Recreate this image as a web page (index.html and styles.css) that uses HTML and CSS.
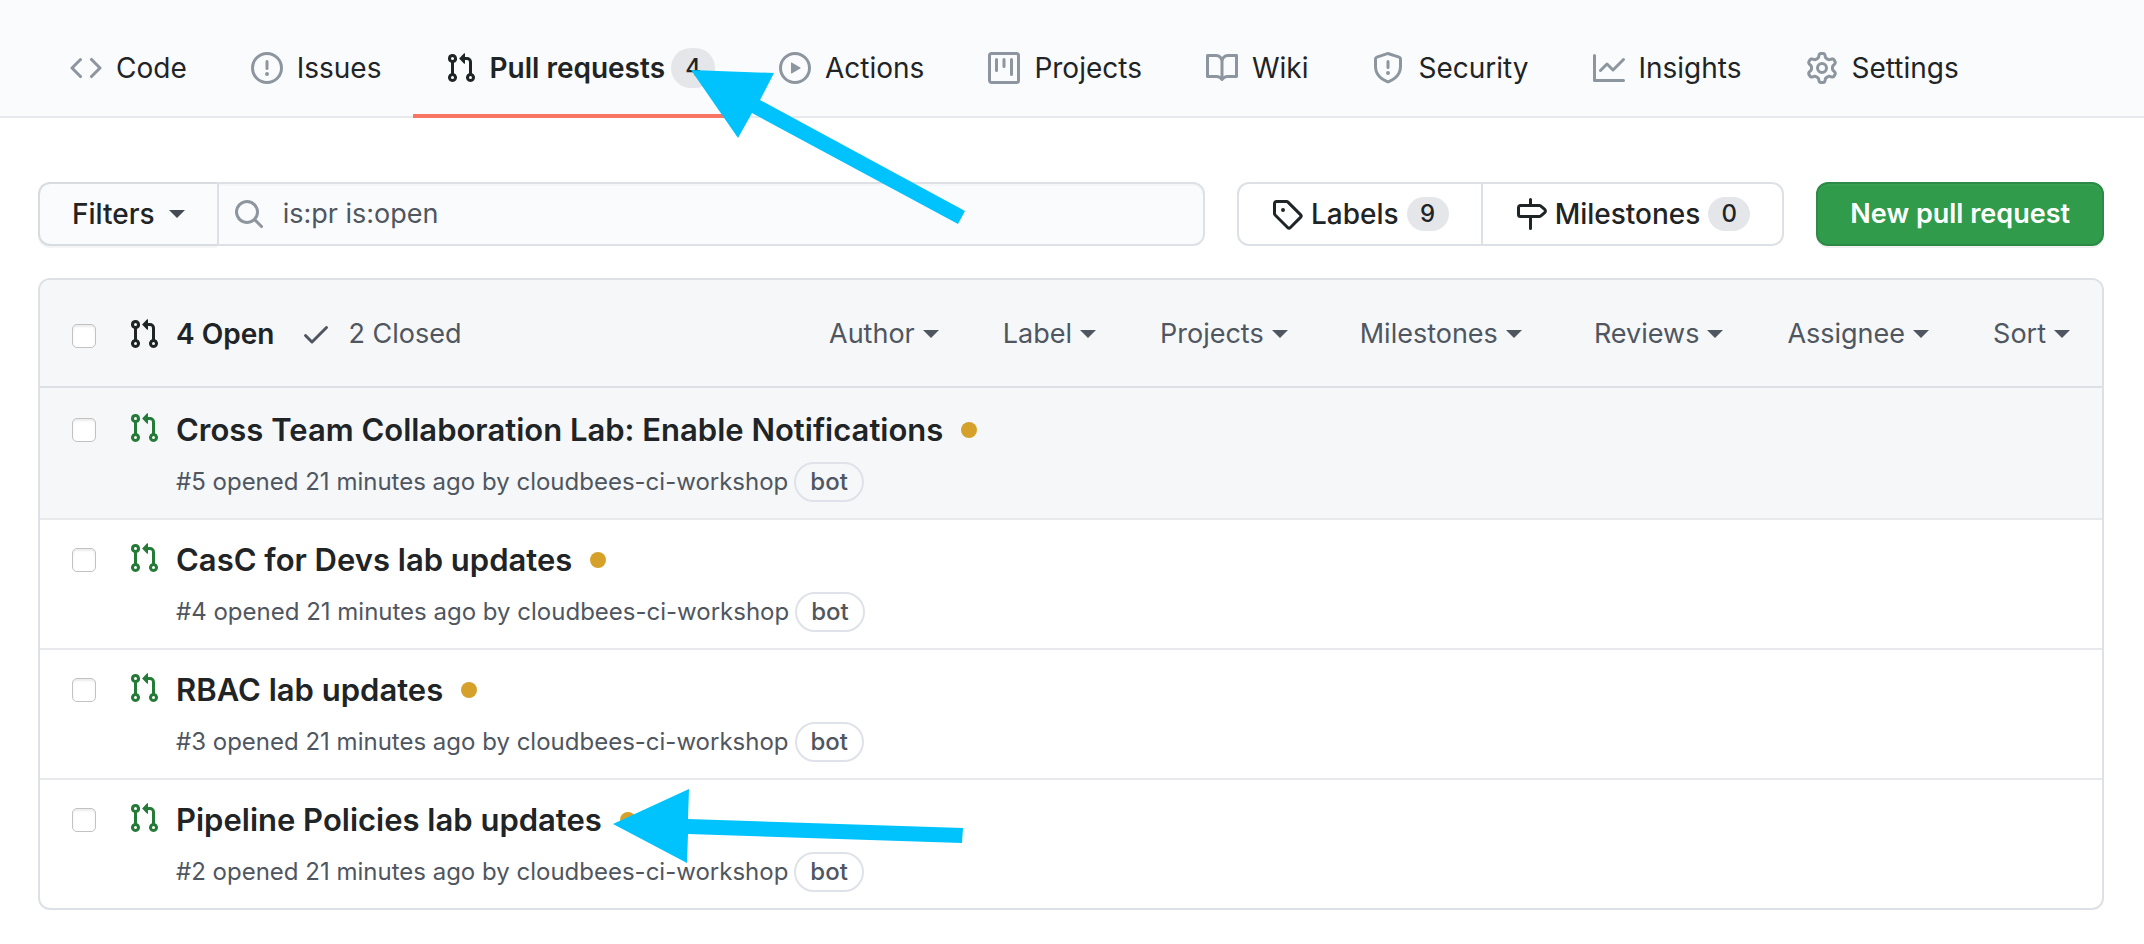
FILE: index.html
```html
<!DOCTYPE html>
<html lang="en">
<head>
<meta charset="utf-8">
<title>Pull requests</title>
<link rel="stylesheet" href="styles.css">
</head>
<body>
<svg class="sprite" aria-hidden="true">
  <symbol id="code" viewBox="0 0 16 16"><path d="M4.72 3.22a.75.75 0 011.06 1.06L2.06 8l3.72 3.72a.75.75 0 11-1.06 1.06L.47 8.53a.75.75 0 010-1.06l4.25-4.25zm6.56 0a.75.75 0 10-1.06 1.06L13.94 8l-3.72 3.72a.75.75 0 101.06 1.06l4.25-4.25a.75.75 0 000-1.06l-4.25-4.25z"/></symbol>
  <symbol id="issue" viewBox="0 0 16 16"><path fill-rule="evenodd" d="M8 1.5a6.5 6.5 0 100 13 6.5 6.5 0 000-13zM0 8a8 8 0 1116 0A8 8 0 010 8zm9 3a1 1 0 11-2 0 1 1 0 012 0zm-.25-6.25a.75.75 0 00-1.5 0v3.5a.75.75 0 001.5 0v-3.5z"/></symbol>
  <symbol id="pr" viewBox="0 0 16 16"><path fill-rule="evenodd" d="M7.177 3.073L9.573.677A.25.25 0 0110 .854v4.792a.25.25 0 01-.427.177L7.177 3.427a.25.25 0 010-.354zM3.75 2.5a.75.75 0 100 1.5.75.75 0 000-1.5zm-2.25.75a2.25 2.25 0 113 2.122v5.256a2.251 2.251 0 11-1.5 0V5.372A2.25 2.25 0 011.5 3.25zM11 2.5h-1V4h1a1 1 0 011 1v5.628a2.251 2.251 0 101.5 0V5A2.5 2.5 0 0011 2.5zm1 10.25a.75.75 0 111.5 0 .75.75 0 01-1.5 0zM3.75 12a.75.75 0 100 1.5.75.75 0 000-1.5z"/></symbol>
  <symbol id="play" viewBox="0 0 16 16"><path fill-rule="evenodd" d="M1.5 8a6.5 6.5 0 1113 0 6.5 6.5 0 01-13 0zM8 0a8 8 0 100 16A8 8 0 008 0zM6.379 5.227A.25.25 0 006 5.442v5.117a.25.25 0 00.379.214l4.264-2.559a.25.25 0 000-.428L6.379 5.227z"/></symbol>
  <symbol id="project" viewBox="0 0 16 16"><path fill-rule="evenodd" d="M1.75 0A1.75 1.75 0 000 1.75v12.5C0 15.216.784 16 1.75 16h12.5A1.75 1.75 0 0016 14.25V1.75A1.75 1.75 0 0014.25 0H1.75zM1.5 1.75a.25.25 0 01.25-.25h12.5a.25.25 0 01.25.25v12.5a.25.25 0 01-.25.25H1.75a.25.25 0 01-.25-.25V1.75zM11.75 3a.75.75 0 00-.75.75v7.5a.75.75 0 001.5 0v-7.5a.75.75 0 00-.75-.75zm-8.25.75a.75.75 0 011.5 0v5.5a.75.75 0 01-1.5 0v-5.5zM8 3a.75.75 0 00-.75.75v3.5a.75.75 0 001.5 0v-3.5A.75.75 0 008 3z"/></symbol>
  <symbol id="book" viewBox="0 0 16 16"><path fill-rule="evenodd" d="M0 1.75A.75.75 0 01.75 1h4.253c1.227 0 2.317.59 3 1.501A3.744 3.744 0 0111.006 1h4.245a.75.75 0 01.75.75v10.5a.75.75 0 01-.75.75h-4.507a2.25 2.25 0 00-1.591.659l-.622.621a.75.75 0 01-1.06 0l-.622-.621A2.25 2.25 0 005.258 13H.75a.75.75 0 01-.75-.75V1.75zm8.755 3a2.25 2.25 0 012.25-2.25H14.5v9h-3.757c-.71 0-1.4.201-1.992.572l.004-7.322zm-1.504 7.324l.004-5.073-.002-2.253A2.25 2.25 0 005.003 2.5H1.5v9h3.757a3.75 3.75 0 011.994.574z"/></symbol>
  <symbol id="shield" viewBox="0 0 16 16"><path fill-rule="evenodd" d="M7.467.133a1.75 1.75 0 011.066 0l5.25 1.68A1.75 1.75 0 0115 3.48V7c0 1.566-.32 3.182-1.303 4.682-.983 1.498-2.585 2.813-5.032 3.855a1.7 1.7 0 01-1.33 0c-2.447-1.042-4.049-2.357-5.032-3.855C1.32 10.182 1 8.566 1 7V3.48a1.75 1.75 0 011.217-1.667l5.25-1.68zm.61 1.429a.25.25 0 00-.153 0l-5.25 1.68a.25.25 0 00-.174.238V7c0 1.358.275 2.666 1.057 3.86.784 1.194 2.121 2.34 4.366 3.297a.2.2 0 00.154 0c2.245-.956 3.582-2.104 4.366-3.298C13.225 9.666 13.5 8.36 13.5 7V3.48a.25.25 0 00-.174-.237l-5.25-1.68zM9 10.5a1 1 0 11-2 0 1 1 0 012 0zm-.25-5.75a.75.75 0 10-1.5 0v3a.75.75 0 001.5 0v-3z"/></symbol>
  <symbol id="graph" viewBox="0 0 16 16"><path fill-rule="evenodd" d="M1.5 1.75a.75.75 0 00-1.5 0v12.5c0 .414.336.75.75.75h14.5a.75.75 0 000-1.5H1.5V1.75zm14.28 2.53a.75.75 0 00-1.06-1.06L10 7.94 7.53 5.47a.75.75 0 00-1.06 0L3.22 8.72a.75.75 0 001.06 1.06L7 7.06l2.47 2.47a.75.75 0 001.06 0l5.25-5.25z"/></symbol>
  <symbol id="gear" viewBox="0 0 16 16"><path fill-rule="evenodd" d="M7.429 1.525a6.593 6.593 0 011.142 0c.036.003.108.036.137.146l.289 1.105c.147.56.55.967.997 1.189.174.086.341.183.501.29.417.278.97.423 1.53.27l1.102-.303c.11-.03.175.016.195.046.219.31.41.641.573.989.014.031.022.11-.059.19l-.815.806c-.411.406-.562.957-.53 1.456a4.588 4.588 0 010 .582c-.032.499.119 1.05.53 1.456l.815.806c.08.08.073.159.059.19a6.494 6.494 0 01-.573.99c-.02.029-.086.074-.195.045l-1.103-.303c-.559-.153-1.112-.008-1.529.27-.16.107-.327.204-.5.29-.449.222-.851.628-.998 1.189l-.289 1.105c-.029.11-.101.143-.137.146a6.613 6.613 0 01-1.142 0c-.036-.003-.108-.037-.137-.146l-.289-1.105c-.147-.56-.55-.967-.997-1.189a4.502 4.502 0 01-.501-.29c-.417-.278-.97-.423-1.53-.27l-1.102.303c-.11.03-.175-.016-.195-.046a6.492 6.492 0 01-.573-.989c-.014-.031-.022-.11.059-.19l.815-.806c.411-.406.562-.957.53-1.456a4.587 4.587 0 010-.582c.032-.499-.119-1.05-.53-1.456l-.815-.806c-.08-.08-.073-.159-.059-.19a6.44 6.44 0 01.573-.99c.02-.029.086-.075.195-.045l1.103.303c.559.153 1.112.008 1.529-.27.16-.107.327-.204.5-.29.449-.222.851-.628.998-1.189l.289-1.105c.029-.11.101-.143.137-.146zM8 0c-.236 0-.47.01-.701.03-.743.065-1.29.615-1.458 1.261l-.29 1.106c-.017.066-.078.158-.211.224a5.994 5.994 0 00-.668.386c-.123.082-.233.09-.3.071L3.27 2.776c-.644-.177-1.392.02-1.82.63a7.977 7.977 0 00-.704 1.217c-.315.675-.111 1.422.363 1.891l.815.806c.05.048.098.147.088.294a6.084 6.084 0 000 .772c.01.147-.038.246-.088.294l-.815.806c-.474.469-.678 1.216-.363 1.891.2.428.436.835.704 1.218.428.609 1.176.806 1.82.63l1.103-.303c.066-.019.176-.011.299.071.213.143.436.272.668.386.133.066.194.158.212.224l.289 1.106c.169.646.715 1.196 1.458 1.26a8.094 8.094 0 001.402 0c.743-.064 1.29-.614 1.458-1.26l.29-1.106c.017-.066.078-.158.211-.224a5.98 5.98 0 00.668-.386c.123-.082.233-.09.3-.071l1.102.302c.644.177 1.392-.02 1.82-.63.268-.382.505-.789.704-1.217.315-.675.111-1.422-.364-1.891l-.814-.806c-.05-.048-.098-.147-.088-.294a6.1 6.1 0 000-.772c-.01-.147.039-.246.088-.294l.814-.806c.475-.469.679-1.216.364-1.891a7.992 7.992 0 00-.704-1.218c-.428-.609-1.176-.806-1.82-.63l-1.103.303c-.066.019-.176.011-.299-.071a5.991 5.991 0 00-.668-.386c-.133-.066-.194-.158-.212-.224L10.16 1.29C9.99.645 9.444.095 8.701.031A8.094 8.094 0 008 0zm1.5 8a1.5 1.5 0 11-3 0 1.5 1.5 0 013 0zM11 8a3 3 0 11-6 0 3 3 0 016 0z"/></symbol>
  <symbol id="search" viewBox="0 0 16 16"><path fill-rule="evenodd" d="M11.5 7a4.499 4.499 0 11-8.998 0A4.499 4.499 0 0111.5 7zm-.82 4.74a6 6 0 111.06-1.06l3.04 3.04a.75.75 0 11-1.06 1.06l-3.04-3.04z"/></symbol>
  <symbol id="tag" viewBox="0 0 16 16"><path fill-rule="evenodd" d="M2.5 7.775V2.75a.25.25 0 01.25-.25h5.025a.25.25 0 01.177.073l6.25 6.25a.25.25 0 010 .354l-5.025 5.025a.25.25 0 01-.354 0l-6.25-6.25a.25.25 0 01-.073-.177zm-1.5 0V2.75C1 1.784 1.784 1 2.75 1h5.025c.464 0 .91.184 1.238.513l6.25 6.25a1.75 1.75 0 010 2.474l-5.026 5.026a1.75 1.75 0 01-2.474 0l-6.25-6.25A1.75 1.75 0 011 7.775zM6 5a1 1 0 100 2 1 1 0 000-2z"/></symbol>
  <symbol id="milestone" viewBox="0 0 16 16"><path fill-rule="evenodd" d="M7.75 0a.75.75 0 01.75.75V3h3.634c.414 0 .814.147 1.13.414l2.07 1.75a1.75 1.75 0 010 2.672l-2.07 1.75a1.75 1.75 0 01-1.13.414H8.5v5.25a.75.75 0 11-1.5 0V10H2.75A1.75 1.75 0 011 8.25v-3.5C1 3.784 1.784 3 2.75 3H7V.75A.75.75 0 017.75 0zm0 8.5h4.384a.25.25 0 00.161-.06l2.07-1.75a.25.25 0 000-.38l-2.07-1.75a.25.25 0 00-.161-.06H2.75a.25.25 0 00-.25.25v3.5c0 .138.112.25.25.25h5z"/></symbol>
  <symbol id="check" viewBox="0 0 16 16"><path d="M13.78 4.22a.75.75 0 010 1.06l-7.25 7.25a.75.75 0 01-1.06 0L2.22 9.28a.75.75 0 011.06-1.06L6 10.94l6.72-6.72a.75.75 0 011.06 0z"/></symbol>
</svg>

<nav class="tabs" aria-label="Repository">
  <a class="tab" href="#"><svg class="icon"><use href="#code"/></svg>Code</a>
  <a class="tab" href="#"><svg class="icon"><use href="#issue"/></svg>Issues</a>
  <a class="tab tab-selected" href="#" aria-current="page"><svg class="icon"><use href="#pr"/></svg>Pull requests<span class="counter counter-tab">4</span></a>
  <a class="tab" href="#"><svg class="icon"><use href="#play"/></svg>Actions</a>
  <a class="tab" href="#"><svg class="icon"><use href="#project"/></svg>Projects</a>
  <a class="tab" href="#"><svg class="icon"><use href="#book"/></svg>Wiki</a>
  <a class="tab" href="#"><svg class="icon"><use href="#shield"/></svg>Security</a>
  <a class="tab" href="#"><svg class="icon"><use href="#graph"/></svg>Insights</a>
  <a class="tab" href="#"><svg class="icon"><use href="#gear"/></svg>Settings</a>
</nav>

<main class="content">
  <div class="toolbar">
    <form class="filter">
      <button class="filter-button" type="button">Filters<span class="caret"></span></button>
      <label class="search">
        <svg class="icon" role="img" aria-label="Search all pull requests"><use href="#search"/></svg>
        <input class="search-input" type="text" value="is:pr is:open">
      </label>
    </form>
    <div class="links">
      <a class="link" href="#"><svg class="icon"><use href="#tag"/></svg>Labels<span class="counter">9</span></a>
      <a class="link" href="#"><svg class="icon"><use href="#milestone"/></svg>Milestones<span class="counter">0</span></a>
    </div>
    <button class="new-button" type="button">New pull request</button>
  </div>

  <section class="list">
    <header class="list-header">
      <input class="check" type="checkbox" aria-label="Select all">
      <a class="state state-open" href="#"><svg class="icon"><use href="#pr"/></svg>4 Open</a>
      <a class="state" href="#"><svg class="icon"><use href="#check"/></svg>2 Closed</a>
      <div class="menus">
        <button class="menu" type="button">Author<span class="caret"></span></button>
        <button class="menu" type="button">Label<span class="caret"></span></button>
        <button class="menu" type="button">Projects<span class="caret"></span></button>
        <button class="menu menu-spaced" type="button">Milestones<span class="caret"></span></button>
        <button class="menu" type="button">Reviews<span class="caret"></span></button>
        <button class="menu" type="button">Assignee<span class="caret"></span></button>
        <button class="menu" type="button">Sort<span class="caret"></span></button>
      </div>
    </header>

    <article class="row row-active">
      <input class="check" type="checkbox" aria-label="Select #5">
      <svg class="icon"><use href="#pr"/></svg>
      <div class="detail">
        <div class="title-line"><a class="title" href="#">Cross Team Collaboration Lab: Enable Notifications</a><span class="dot"></span></div>
        <div class="meta">#5 opened 21 minutes ago by cloudbees-ci-workshop<span class="bot">bot</span></div>
      </div>
    </article>
    <article class="row">
      <input class="check" type="checkbox" aria-label="Select #4">
      <svg class="icon"><use href="#pr"/></svg>
      <div class="detail">
        <div class="title-line"><a class="title" href="#">CasC for Devs lab updates</a><span class="dot"></span></div>
        <div class="meta">#4 opened 21 minutes ago by cloudbees-ci-workshop<span class="bot">bot</span></div>
      </div>
    </article>
    <article class="row">
      <input class="check" type="checkbox" aria-label="Select #3">
      <svg class="icon"><use href="#pr"/></svg>
      <div class="detail">
        <div class="title-line"><a class="title" href="#">RBAC lab updates</a><span class="dot"></span></div>
        <div class="meta">#3 opened 21 minutes ago by cloudbees-ci-workshop<span class="bot">bot</span></div>
      </div>
    </article>
    <article class="row">
      <input class="check" type="checkbox" aria-label="Select #2">
      <svg class="icon"><use href="#pr"/></svg>
      <div class="detail">
        <div class="title-line"><a class="title" href="#">Pipeline Policies lab updates</a><span class="dot"></span></div>
        <div class="meta">#2 opened 21 minutes ago by cloudbees-ci-workshop<span class="bot">bot</span></div>
      </div>
    </article>
  </section>
</main>

<svg class="arrows" width="1000" height="900" aria-hidden="true">
  <path d="M691 70L774 73L760 100L965 211L958 224L752 113L738 138Z"/>
  <path d="M613 824L689 789L688 819L963 828L962 843L688 834L687 863Z"/>
</svg>
</body>
</html>
```
FILE: styles.css
```css
* { box-sizing: border-box; }

body {
  margin: 0;
  position: relative;
  background: #fff;
  color: #1f2426;
  font-family: Inter, "Liberation Sans", sans-serif;
  font-size: 28px;
  line-height: 40px;
}

a { color: inherit; text-decoration: none; }
button, input { font: inherit; color: inherit; margin: 0; }

.sprite { display: none; }
.icon { width: 32px; height: 32px; flex: none; fill: currentColor; }

.caret {
  border: 8px solid transparent;
  border-top-color: currentColor;
  border-bottom: 0;
}

.counter {
  min-width: 42px;
  padding: 0 12px;
  border-radius: 20px;
  background: #e4e6ea;
  font-size: 24px;
  font-weight: 500;
  line-height: 34px;
  text-align: center;
}
.counter-tab { min-width: 44px; line-height: 40px; }

/* Repository tabs */
.tabs {
  display: flex;
  padding: 22px 38px 0;
  background: #fafbfc;
  box-shadow: inset 0 -2px #e7e9ed;
}
.tab {
  display: flex;
  align-items: center;
  height: 96px;
  padding: 0 32px;
  border-bottom: 4px solid transparent;
  white-space: nowrap;
}
.tab .icon { margin-right: 14px; color: #8d969f; }
.tab .counter { margin-left: 6px; }
.tab-selected { border-color: #f97563; font-weight: 600; }
.tab-selected .icon { margin-right: 12px; color: inherit; }

.content { padding: 64px 40px 34px 38px; }

/* Filter bar */
.toolbar { display: flex; gap: 32px; margin-bottom: 32px; }
.filter { display: flex; flex: 1; min-width: 0; }
.filter-button {
  display: flex;
  align-items: center;
  gap: 14px;
  height: 64px;
  padding: 0 32px;
  border: 2px solid #d9dcdf;
  border-right: 0;
  border-radius: 12px 0 0 12px;
  background: #fafbfc;
  box-shadow: 0 2px #f5f5f5;
  font-weight: 500;
}
.filter-button .caret { color: #444b52; }
.search {
  display: flex;
  align-items: center;
  flex: 1;
  gap: 18px;
  padding: 0 14px;
  border: 2px solid #dde1e6;
  border-radius: 0 12px 12px 0;
  background: #fafbfc;
  box-shadow: inset 0 2px #f5f6f8;
  color: #8d969f;
}
.search-input {
  flex: 1;
  min-width: 0;
  padding: 0;
  border: 0;
  outline: 0;
  background: none;
  color: #4f5660;
  font-size: 27px;
}
.links { display: flex; border: 2px solid #dde1e6; border-radius: 12px; }
.link {
  display: flex;
  align-items: center;
  gap: 8px;
  padding: 0 32px;
  font-weight: 500;
}
.link + .link { border-left: 2px solid #dde1e6; }
.new-button {
  height: 64px;
  padding: 0 32px;
  border: 2px solid #2c8a46;
  border-radius: 12px;
  background: #2f9b4b;
  box-shadow: 0 2px #f0f0f0, inset 0 2px #38a053;
  color: #fff;
  font-size: 27px;
  font-weight: 600;
  white-space: nowrap;
}

/* Pull request list */
.list { border: 2px solid #dde1e6; border-radius: 12px; overflow: hidden; }
.check {
  appearance: none;
  flex: none;
  width: 24px;
  height: 24px;
  border: 1px solid #c2c2c2;
  border-radius: 5px;
  background: #fff;
  box-shadow: inset 0 2px 2px #ececec;
}
.list-header {
  display: flex;
  align-items: center;
  height: 108px;
  padding: 2px 32px 0;
  border-bottom: 2px solid #dde1e6;
  background: #f5f7f9;
  color: #4f5660;
  font-size: 27px;
}
.list-header .check { margin-top: 4px; }
.state { display: flex; align-items: center; gap: 16px; margin-left: 26px; }
.state-open { margin-left: 32px; color: #1f2426; font-size: 28px; font-weight: 600; }
.menus { display: flex; gap: 64px; margin-left: auto; }
.menu {
  display: flex;
  align-items: center;
  gap: 8px;
  padding: 0;
  border: 0;
  background: none;
}
.menu-spaced { margin: 0 8px; }
.row {
  display: flex;
  height: 130px;
  padding: 28px 32px 0;
  border-top: 2px solid #e7e9ed;
}
.row-active { border-color: #f5f7f9; background: #f5f7f9; }
.row .icon { margin: -6px 16px 0 32px; color: #247a37; }
.title-line { display: flex; align-items: center; gap: 18px; height: 24px; }
.title { font-size: 31px; font-weight: 600; }
.dot { width: 16px; height: 16px; border-radius: 50%; background: #d6a12b; }
.meta {
  display: flex;
  align-items: center;
  gap: 6px;
  margin-top: 20px;
  color: #4f5660;
  font-size: 24px;
}
.bot {
  padding: 0 14px;
  border: 2px solid #dfe2e8;
  border-radius: 20px;
  font-weight: 500;
  line-height: 36px;
}

/* Callout arrows drawn over the page */
.arrows { position: absolute; top: 0; left: 0; fill: #00c3fd; pointer-events: none; }
```
